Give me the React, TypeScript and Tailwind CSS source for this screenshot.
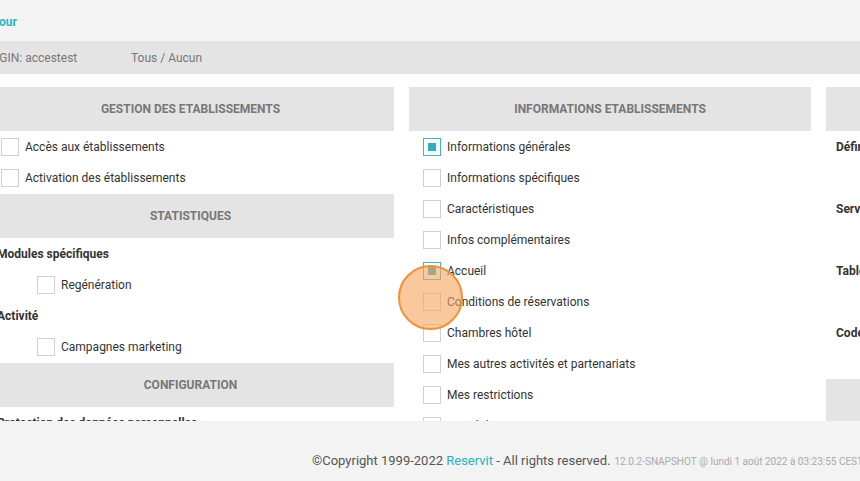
const font = { fontFamily: "Roboto, 'Liberation Sans', sans-serif" };

function Header({ title, gap }: { title: string; gap?: boolean }) {
  return (
    <div
      className={`h-[44px] bg-[#e4e4e4] flex items-center justify-center text-xs font-bold text-[#777] uppercase ${
        gap ? "mt-[1px]" : ""
      }`}
    >
      {title}
    </div>
  );
}

function Check({ label, checked, indent }: { label: string; checked?: boolean; indent?: boolean }) {
  return (
    <div className={`h-[31px] flex items-center gap-[6px] ${indent ? "pl-[50px]" : "pl-[14px]"}`}>
      <span
        className={`w-[18px] h-[18px] border bg-white flex items-center justify-center shrink-0 ${
          checked ? "border-[#3bb6c4]" : "border-[#cfcfcf]"
        }`}
      >
        {checked && <span className="w-[8px] h-[8px] bg-[#2bb0c0]" />}
      </span>
      <span className="text-xs text-[#333]">{label}</span>
    </div>
  );
}

function Label({ text }: { text: string }) {
  return <div className="h-[31px] flex items-center pl-[10px] text-xs font-bold text-[#333] whitespace-nowrap">{text}</div>;
}

const infos = [
  "Informations générales",
  "Informations spécifiques",
  "Caractéristiques",
  "Infos complémentaires",
  "Accueil",
  "Conditions de réservations",
  "Chambres hôtel",
  "Mes autres activités et partenariats",
  "Mes restrictions",
  "Mes échanges entre partenaires",
];

export default function App() {
  return (
    <div className="relative w-[860px] h-[481px] overflow-hidden flex flex-col bg-white" style={font}>
      {/* top link */}
      <div className="h-[41px] bg-[#f3f3f3] flex items-center pt-[3px] shrink-0">
        <a className="-ml-[19px] text-xs font-bold text-[#2bb6c6]">Retour</a>
      </div>

      {/* login bar */}
      <div className="h-[33px] bg-[#e4e4e4] flex items-center text-xs text-[#777] shrink-0 whitespace-nowrap">
        <span className="-ml-[15px] w-[146px]">LOGIN: accestest</span>
        <span>Tous / Aucun</span>
      </div>

      {/* columns */}
      <div className="h-[347px] overflow-hidden shrink-0">
        <div className="flex gap-[15px] pt-[13px] -ml-[13px]">
          <div className="w-[407px] shrink-0">
            <Header title="Gestion des etablissements" />
            <Check label="Accès aux établissements" />
            <Check label="Activation des établissements" />
            <Header title="Statistiques" gap />
            <Label text="Modules spécifiques" />
            <Check label="Regénération" indent />
            <Label text="Activité" />
            <Check label="Campagnes marketing" indent />
            <Header title="Configuration" gap />
            <Label text="Protection des données personnelles" />
          </div>

          <div className="w-[402px] shrink-0">
            <Header title="Informations etablissements" />
            {infos.map((l, i) => (
              <Check key={l} label={l} checked={i === 0 || i === 4} />
            ))}
          </div>

          <div className="w-[402px] shrink-0">
            <Header title="Tarifs et disponibilités" />
            <Label text="Définition des tarifs" />
            <div className="h-[31px]" />
            <Label text="Services" />
            <div className="h-[31px]" />
            <Label text="Tables de prix" />
            <div className="h-[31px]" />
            <Label text="Codes promo" />
            <div className="h-[31px]" />
            <Header title="Distribution" />
          </div>
        </div>
      </div>

      {/* footer */}
      <div className="flex-1 bg-[#f3f3f3] pl-[312px] pt-[27px] whitespace-nowrap overflow-hidden">
        <span className="text-[13px] text-[#555]">
          ©Copyright 1999-2022 <a className="text-[#2bb0c0]">Reservit</a> - All rights reserved.
        </span>{" "}
        <span className="text-[10px] text-[#aaa]">12.0.2-SNAPSHOT @ lundi 1 août 2022 à 03:23:55 CEST</span>
      </div>

      {/* click marker */}
      <div className="absolute left-[398px] top-[265px] w-[65px] h-[65px] rounded-full border-2 border-[#f0913a] bg-[#f7a35c]/60" />
    </div>
  );
}
